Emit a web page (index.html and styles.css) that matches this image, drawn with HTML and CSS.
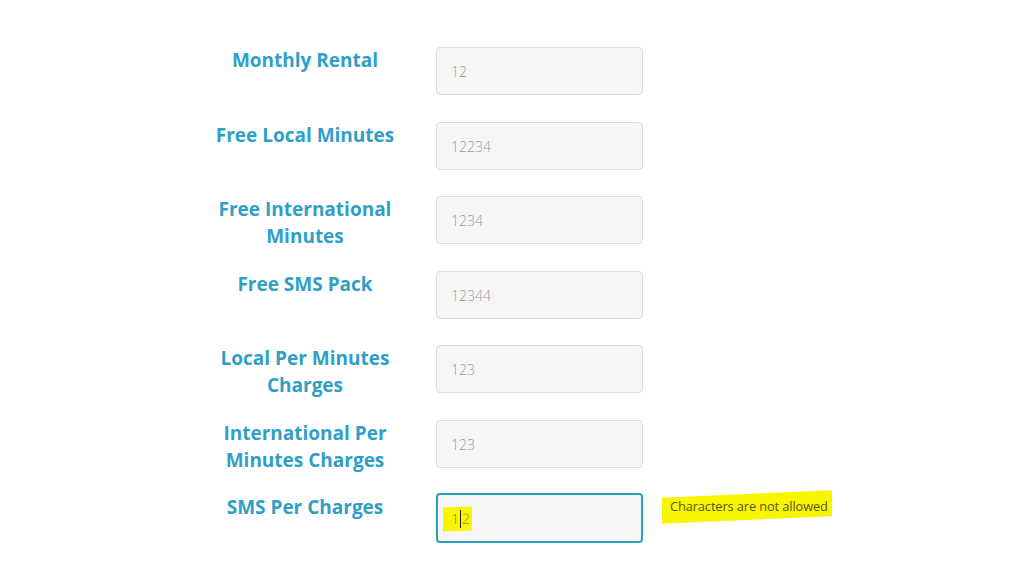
FILE: index.html
```html
<!DOCTYPE html>
<html lang="en">
<head>
<meta charset="utf-8">
<title>Package Form</title>
<link rel="stylesheet" href="styles.css">
</head>
<body>
<form class="form">
  <div class="row">
    <label class="label">Monthly Rental</label>
    <div class="input">12</div>
  </div>
  <div class="row">
    <label class="label">Free Local Minutes</label>
    <div class="input">12234</div>
  </div>
  <div class="row">
    <label class="label">Free International Minutes</label>
    <div class="input">1234</div>
  </div>
  <div class="row">
    <label class="label">Free SMS Pack</label>
    <div class="input">12344</div>
  </div>
  <div class="row">
    <label class="label">Local Per Minutes Charges</label>
    <div class="input">123</div>
  </div>
  <div class="row">
    <label class="label">International Per Minutes Charges</label>
    <div class="input">123</div>
  </div>
  <div class="row">
    <label class="label">SMS Per Charges</label>
    <div class="input input-focus"><span class="mark">1<span class="caret"></span>2</span></div>
    <div class="error"><span class="error-text">Characters are not allowed</span></div>
  </div>
</form>
</body>
</html>
```
FILE: styles.css
```css
html, body {
  margin: 0;
  padding: 0;
  background: #ffffff;
}

.form {
  display: flex;
  flex-direction: column;
  gap: 20.5px;
  padding: 47px 0 0 200px;
}

.row {
  display: grid;
  grid-template-columns: 210px 207px 200px;
  column-gap: 26px;
  align-items: start;
  height: 54px;
}

.label {
  font-family: "Open Sans", "DejaVu Sans", sans-serif;
  font-weight: 700;
  font-size: 19px;
  line-height: 27px;
  color: #2f9fc7;
  text-align: center;
}

.input {
  box-sizing: border-box;
  height: 48px;
  border: 1px solid #dcdcdc;
  border-radius: 4px;
  background: #f6f6f6;
  padding: 0 14px;
  font-family: "Open Sans", sans-serif;
  font-weight: 300;
  font-size: 14px;
  line-height: 47px;
  color: #9d9994;
}

.input-focus {
  height: 50px;
  margin-top: -1px;
  border: 2px solid #2a9fc4;
  padding: 0 5px;
  line-height: 46px;
}

.mark {
  display: inline-block;
  background: #f7f500;
  padding: 0 2px 0 8px;
  line-height: 24px;
  color: #8c8a3a;
  vertical-align: middle;
  transform: skewY(-2deg);
}

.caret {
  display: inline-block;
  width: 1px;
  height: 18px;
  margin: 0 1px;
  background: #222;
  vertical-align: -4px;
}

.error-text {
  position: relative;
  display: inline-block;
  font-family: "Open Sans", sans-serif;
  font-size: 12.8px;
  line-height: 18px;
  color: #56561f;
  letter-spacing: -0.1px;
  padding: 2px;
  margin-left: -1px;
  margin-top: 1px;
  z-index: 0;
}

.error-text::before {
  content: "";
  position: absolute;
  left: -6px;
  right: -2px;
  top: -1px;
  bottom: -3px;
  background: #f7f500;
  transform: skewY(-2.6deg);
  z-index: -1;
}
```
